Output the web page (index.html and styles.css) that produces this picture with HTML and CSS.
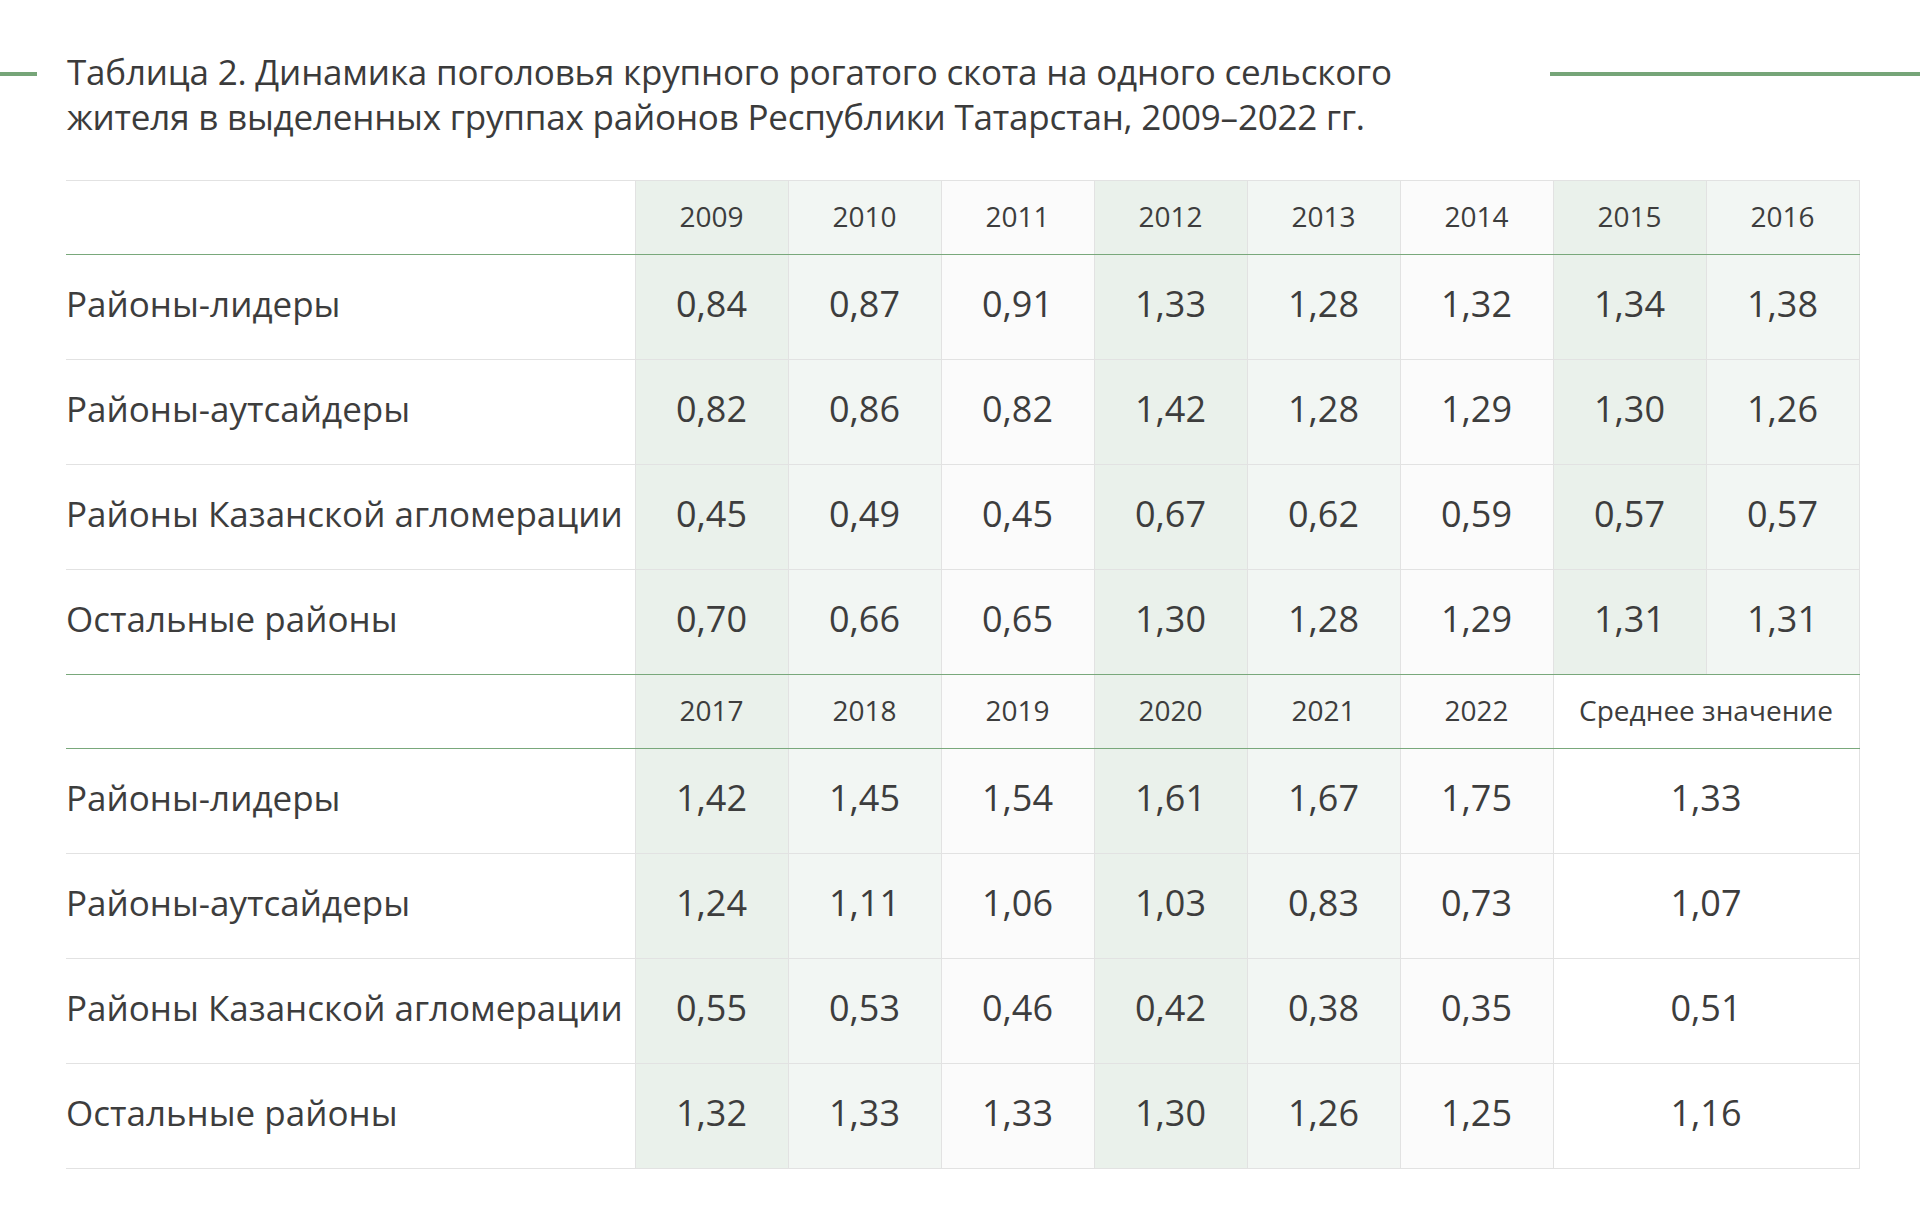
FILE: index.html
```html
<!DOCTYPE html>
<html lang="ru">
<head>
<meta charset="utf-8">
<title>Таблица 2</title>
<link rel="stylesheet" href="styles.css">
</head>
<body>
<header class="title-bar">
  <span class="rule rule-left"></span>
  <h1 class="title">Таблица 2. Динамика поголовья крупного рогатого скота на одного сельского<br>жителя в выделенных группах районов Республики Татарстан, 2009–2022 гг.</h1>
  <span class="rule rule-right"></span>
</header>
<table class="data">
  <colgroup>
    <col class="c-label">
    <col class="c-dark"><col class="c-light"><col class="c-white">
    <col class="c-dark"><col class="c-light"><col class="c-white">
    <col class="c-dark"><col class="c-light">
  </colgroup>
  <tbody>
    <tr class="head first">
      <th class="label"></th>
      <th>2009</th><th>2010</th><th>2011</th><th>2012</th><th>2013</th><th>2014</th><th>2015</th><th>2016</th>
    </tr>
    <tr class="row">
      <td class="label">Районы-лидеры</td>
      <td>0,84</td><td>0,87</td><td>0,91</td><td>1,33</td><td>1,28</td><td>1,32</td><td>1,34</td><td>1,38</td>
    </tr>
    <tr class="row">
      <td class="label">Районы-аутсайдеры</td>
      <td>0,82</td><td>0,86</td><td>0,82</td><td>1,42</td><td>1,28</td><td>1,29</td><td>1,30</td><td>1,26</td>
    </tr>
    <tr class="row">
      <td class="label">Районы Казанской агломерации</td>
      <td>0,45</td><td>0,49</td><td>0,45</td><td>0,67</td><td>0,62</td><td>0,59</td><td>0,57</td><td>0,57</td>
    </tr>
    <tr class="row pre-head">
      <td class="label">Остальные районы</td>
      <td>0,70</td><td>0,66</td><td>0,65</td><td>1,30</td><td>1,28</td><td>1,29</td><td>1,31</td><td>1,31</td>
    </tr>
    <tr class="head second">
      <th class="label"></th>
      <th>2017</th><th>2018</th><th>2019</th><th>2020</th><th>2021</th><th>2022</th><th class="avg" colspan="2">Среднее значение</th>
    </tr>
    <tr class="row">
      <td class="label">Районы-лидеры</td>
      <td>1,42</td><td>1,45</td><td>1,54</td><td>1,61</td><td>1,67</td><td>1,75</td><td class="avg" colspan="2">1,33</td>
    </tr>
    <tr class="row">
      <td class="label">Районы-аутсайдеры</td>
      <td>1,24</td><td>1,11</td><td>1,06</td><td>1,03</td><td>0,83</td><td>0,73</td><td class="avg" colspan="2">1,07</td>
    </tr>
    <tr class="row">
      <td class="label">Районы Казанской агломерации</td>
      <td>0,55</td><td>0,53</td><td>0,46</td><td>0,42</td><td>0,38</td><td>0,35</td><td class="avg" colspan="2">0,51</td>
    </tr>
    <tr class="row">
      <td class="label">Остальные районы</td>
      <td>1,32</td><td>1,33</td><td>1,33</td><td>1,30</td><td>1,26</td><td>1,25</td><td class="avg" colspan="2">1,16</td>
    </tr>
  </tbody>
</table>
</body>
</html>
```

FILE: styles.css
```css
html, body {
  margin: 0;
  padding: 0;
  background: #ffffff;
}

body {
  font-family: "Open Sans", "Noto Sans", sans-serif;
  color: #3d3d3d;
  width: 1920px;
}

.title-bar {
  display: flex;
  align-items: flex-start;
  padding-top: 49px;
}

.rule {
  display: block;
  height: 4px;
  background: #76a578;
  margin-top: 23px;
  flex: none;
}

.rule-left {
  width: 37px;
  margin-right: 30px;
}

.rule-right {
  width: 370px;
  margin-left: auto;
}

.title {
  margin: 0;
  font-size: 35px;
  line-height: 45px;
  font-weight: 400;
  color: #3b3b3b;
  white-space: nowrap;
  letter-spacing: -0.2px;
}

.data {
  margin: 41px 0 0 66px;
  width: 1793px;
  table-layout: fixed;
  border-collapse: collapse;
}

.c-label { width: 569px; background: #ffffff; }
.c-dark  { width: 153px; background: #eaf1eb; }
.c-light { width: 153px; background: #f2f6f3; }
.c-white { width: 153px; background: #fbfbfb; }

.data th,
.data td {
  padding: 0;
  text-align: center;
  vertical-align: middle;
  border: 1px solid #e2e2e2;
  color: #3d3d3d;
}

.data th {
  font-size: 28px;
  font-weight: 400;
  height: 69px;
  padding-bottom: 4px;
}

.data td {
  font-size: 36px;
  font-weight: 400;
  height: 97px;
  padding-bottom: 7px;
}

.data td.label {
  font-size: 35px;
}

.data .label {
  text-align: left;
  border-left: none;
  white-space: nowrap;
}

.data .avg {
  background: #ffffff;
}

.head th {
  border-bottom: 1px solid #79a87b;
}

.head.second th,
.pre-head td {
  border-top-color: #79a87b;
}

.pre-head td {
  border-bottom: 1px solid #79a87b;
}
```
